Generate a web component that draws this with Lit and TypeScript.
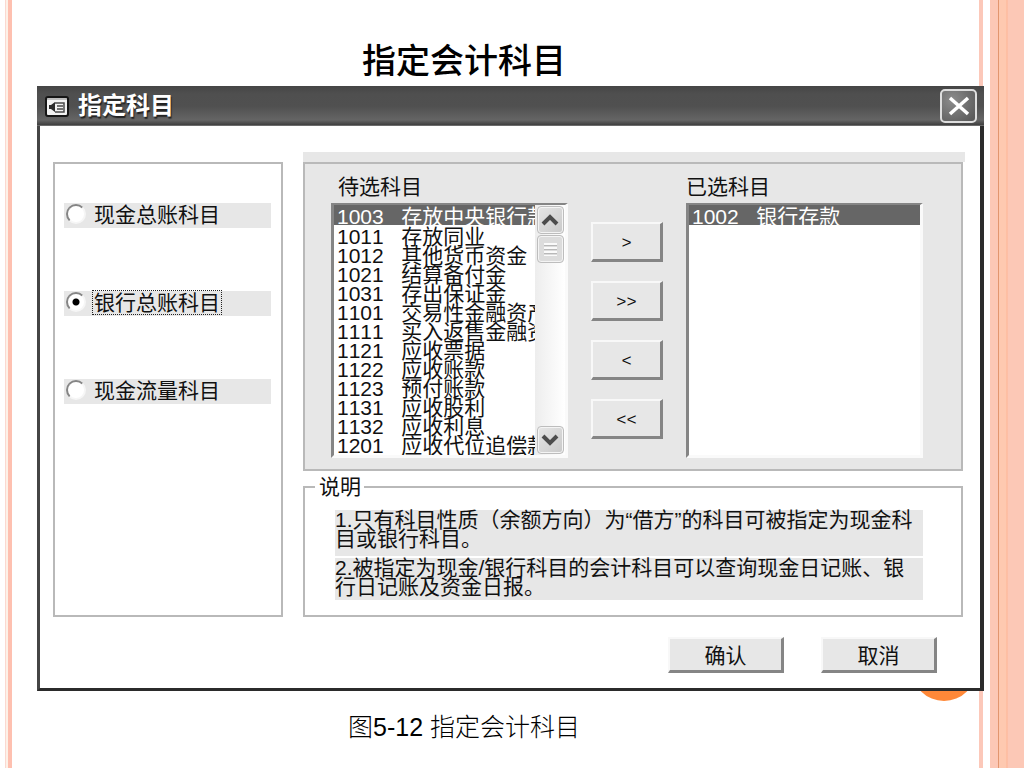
import { LitElement, html, css, svg } from "lit";
import { customElement, property, state } from "lit/decorators.js";

interface Account {
  code: string;
  name: string;
}

const PENDING: Account[] = [
  { code: "1003", name: "存放中央银行款项" },
  { code: "1011", name: "存放同业" },
  { code: "1012", name: "其他货币资金" },
  { code: "1021", name: "结算备付金" },
  { code: "1031", name: "存出保证金" },
  { code: "1101", name: "交易性金融资产" },
  { code: "1111", name: "买入返售金融资产" },
  { code: "1121", name: "应收票据" },
  { code: "1122", name: "应收账款" },
  { code: "1123", name: "预付账款" },
  { code: "1131", name: "应收股利" },
  { code: "1132", name: "应收利息" },
  { code: "1201", name: "应收代位追偿款" },
];

const CHOSEN: Account[] = [{ code: "1002", name: "银行存款" }];

const KINDS = ["现金总账科目", "银行总账科目", "现金流量科目"];

const MOVES = [
  { sign: ">", label: "选入" },
  { sign: ">>", label: "全部选入" },
  { sign: "<", label: "移出" },
  { sign: "<<", label: "全部移出" },
];

const chevron = (points: string) => svg`<polyline points=${points} fill="none" stroke="#4c4c4c" stroke-width="4" />`;

@customElement("account-list")
export class AccountList extends LitElement {
  @property() label = "";
  @property({ attribute: false }) items: Account[] = [];
  @property({ type: Boolean }) scrollable = false;

  static styles = css`
    :host {
      display: flex;
      flex-direction: column;
      min-width: 0;
    }
    label {
      height: 30px;
      line-height: 28px;
      padding-left: 7px;
      white-space: nowrap;
    }
    :host([flush]) label {
      padding-left: 0;
    }
    .frame {
      display: flex;
      height: 250px;
      background: #fff;
      border: 3px solid;
      border-width: 2px 3px 3px 3px;
      border-color: #858585 #fafafa #fafafa #858585;
    }
    select {
      flex: 1;
      min-width: 0;
      height: 100%;
      margin: 0;
      padding: 0;
      border: 0;
      outline: 0;
      border-radius: 0;
      background: #fff;
      color: #111;
      font: inherit;
      font-kerning: none;
      overflow: hidden;
      scrollbar-width: none;
    }
    option {
      display: flex;
      align-items: center;
      box-sizing: border-box;
      height: 19px;
      min-height: 0;
      padding: 0 0 0 3px;
      font: inherit;
      overflow: visible;
    }
    option:checked {
      background: #666 linear-gradient(#666, #666);
      color: #fff;
      height: 20px;
    }
    .bar {
      width: 30px;
      display: flex;
      flex-direction: column;
      align-items: center;
      gap: 1px;
      padding: 1px 0;
      box-sizing: border-box;
      background: linear-gradient(90deg, #ededed, #fff);
    }
    .bar button {
      display: grid;
      place-items: center;
      width: 27px;
      height: 28px;
      padding: 0;
      border: 1px solid #bdbdbd;
      border-radius: 4px;
      background: linear-gradient(135deg, #e6e6e6, #c9c9c9);
      box-shadow: inset 0 0 0 1px #f4f4f4;
    }
    .track {
      flex: 1;
    }
    .thumb {
      width: 25px;
      height: 26px;
      border: 1px solid #bdbdbd;
      border-radius: 4px;
      background: #dcdcdc;
      box-shadow: inset 0 0 0 1px #f4f4f4;
      display: grid;
      place-items: center;
    }
    .grip {
      width: 13px;
      height: 13px;
      background: repeating-linear-gradient(#fafafa 0 2px, #b8b8b8 2px 3px, #dcdcdc 3px 4px);
    }
    svg {
      display: block;
    }
  `;

  private scrollList(step: number) {
    this.renderRoot.querySelector("select")?.scrollBy(0, step * 19);
  }

  render() {
    return html`
      <label for="list">${this.label}</label>
      <div class="frame">
        <select id="list" size="13">
          ${this.items.map(
            (a, i) => html`<option value=${a.code} ?selected=${i === 0}>${a.code}\u00a0\u00a0\u00a0${a.name}</option>`
          )}
        </select>
        ${this.scrollable
          ? html`<div class="bar">
              <button type="button" aria-label="向上滚动" @click=${() => this.scrollList(-1)}>
                <svg width="18" height="12" viewBox="0 0 18 12">${chevron("2,10 9,3 16,10")}</svg>
              </button>
              <div class="track"><div class="thumb"><div class="grip"></div></div></div>
              <button type="button" aria-label="向下滚动" @click=${() => this.scrollList(1)}>
                <svg width="18" height="12" viewBox="0 0 18 12">${chevron("2,2 9,9 16,2")}</svg>
              </button>
            </div>`
          : null}
      </div>
    `;
  }
}

@customElement("app-root")
export class AppRoot extends LitElement {
  @state() private kind = 1;

  static styles = css`
    :host {
      display: block;
      font-family: "Liberation Sans", "Noto Sans CJK SC", sans-serif;
      font-size: 21px;
      color: #111;
    }
    .slide {
      position: relative;
      z-index: 0;
      box-sizing: border-box;
      min-height: 100vh;
      padding: 0 40px 0 37px;
      display: flex;
      flex-direction: column;
      background:
        linear-gradient(90deg, #fbd9d0 0 1px, #fdf1e8 1px 3px, #fec0b0 3px 7px) 5px 0 / 7px 100% no-repeat,
        linear-gradient(
            90deg,
            #fcc8b9 0 4px,
            #fff 4px 11px,
            #fcc8b6 11px 19px,
            #e2966f 19px 20px,
            #fec9b0 20px 27px,
            #feb595 28px,
            #fcc8b6 29px 45px
          )
          100% 0 / 45px 100% no-repeat,
        #fff;
    }
    .dot {
      position: absolute;
      z-index: -1;
      right: 48px;
      top: 637px;
      width: 64px;
      height: 64px;
      border-radius: 50%;
      background: #ff8838;
    }
    h1 {
      margin: 0;
      height: 86px;
      padding: 36px 93px 0 0;
      box-sizing: border-box;
      line-height: 50px;
      font-size: 34px;
      font-weight: 500;
      text-align: center;
      color: #000;
    }
    .caption {
      margin: 0;
      padding: 17px 93px 0 0;
      line-height: 38px;
      font-size: 25px;
      font-weight: 300;
      text-align: center;
      color: #000;
    }
    .dialog {
      border: solid #454545;
      border-width: 0 4px 3px 3px;
      border-right-color: #2b2b2b;
      border-bottom-color: #2b2b2b;
      background: #fff;
    }
    .titlebar {
      display: flex;
      align-items: center;
      gap: 9px;
      height: 40px;
      margin: 0 -4px 0 -3px;
      padding: 0 7px 0 8px;
      box-sizing: border-box;
      background: linear-gradient(#454545 0, #4f4f4f 20%, #505050 50%, #656565 85%, #404040 97%, #8a8a8a 100%);
    }
    .titlebar h2 {
      flex: 1;
      margin: 0;
      font-size: 24px;
      line-height: 36px;
      font-weight: 700;
      color: #fff;
      text-shadow: 1px 2px 1px #222;
    }
    .close {
      display: grid;
      place-items: center;
      width: 37px;
      height: 34px;
      padding: 0;
      border: 2px solid #dedede;
      border-radius: 5px;
      background: radial-gradient(circle at 30% 30%, #8c8c8c, #555);
    }
    .body {
      padding: 26px 15px 15px 13px;
    }
    .columns {
      display: grid;
      grid-template-columns: 230px 1fr;
      gap: 20px;
    }
    .panel {
      border: 2px solid #b9b9b9;
      box-sizing: border-box;
    }
    .kinds {
      margin-top: 10px;
      padding: 39px 10px 0 9px;
      display: flex;
      flex-direction: column;
      gap: 63px;
    }
    .kind {
      display: flex;
      align-items: center;
      height: 25px;
      gap: 7px;
      padding-left: 2px;
      background: #e7e7e7;
      white-space: nowrap;
    }
    .kind span {
      line-height: 23px;
      padding: 0 1px;
      margin-bottom: 3px;
    }
    .kind input:checked + span {
      outline: 1px dotted #222;
    }
    .kind input {
      appearance: none;
      width: 20px;
      height: 20px;
      margin: 0 0 3px;
      box-sizing: border-box;
      border: 2px solid;
      border-color: #858585 #f6f6f6 #f6f6f6 #858585;
      border-radius: 50%;
      background: #fff;
      outline: 0;
    }
    .kind input:checked {
      background: radial-gradient(circle, #000 0 3px, #fff 4px);
    }
    .strip {
      height: 10px;
      background: #e7e7e7;
    }
    .picker {
      margin-right: 2px;
      padding: 9px 38px 11px 26px;
      display: grid;
      grid-template-columns: minmax(0, 1fr) 72px minmax(0, 1fr);
      gap: 23px;
      background: #e7e7e7;
    }
    .moves {
      display: flex;
      flex-direction: column;
      gap: 19px;
      padding-top: 49px;
    }
    .push {
      height: 40px;
      padding: 0;
      border: solid;
      border-width: 2px 3px 3px 2px;
      border-color: #f8f8f8 #858585 #858585 #f8f8f8;
      background: #e7e7e7;
      font: inherit;
      color: #111;
    }
    .moves .push {
      padding-top: 4px;
      font-family: "Liberation Mono", monospace;
      font-size: 17px;
    }
    fieldset {
      min-width: 0;
      margin: 3px 2px 0 0;
      padding: 10px 38px 15px 30px;
      border: 2px solid #b9b9b9;
    }
    legend {
      margin-left: -20px;
      padding: 0 3px 0 4px;
      line-height: 26px;
    }
    .note {
      margin: 0 0 2px;
      line-height: 19px;
      color: #111;
      background: #e7e7e7;
      padding-bottom: 8px;
    }
    .note:last-child {
      margin: 0;
      padding-bottom: 4px;
    }
    .actions {
      display: flex;
      justify-content: flex-end;
      gap: 37px;
      padding: 20px 28px 0 0;
    }
    .actions .push {
      width: 116px;
      height: 36px;
      padding-bottom: 2px;
    }
    svg {
      display: block;
    }
  `;

  render() {
    return html`
      <main class="slide">
        <div class="dot"></div>
        <h1>指定会计科目</h1>
        <section class="dialog" role="dialog" aria-labelledby="dialog-title">
          <header class="titlebar">
            <svg width="24" height="21" viewBox="0 0 24 21" aria-hidden="true">
              <rect x="1" y="1" width="22" height="19" rx="2" fill="#f2f2f2" stroke="#161616" stroke-width="2" />
              <path d="M2 3h20" stroke="#8a8a8a" stroke-width="1" />
              <path d="M4 9h2l4-3v10l-4-3H4z" fill="#2c2c2c" />
              <path d="M10 7h9v9h-9M12 10h6M12 13h6" fill="none" stroke="#4a4a4a" stroke-width="1.500" />
            </svg>
            <h2 id="dialog-title">指定科目</h2>
            <button class="close" type="button" aria-label="关闭">
              <svg width="22" height="20" viewBox="0 0 22 20">
                <path d="M2 2l18 16M20 2L2 18" stroke="#fff" stroke-width="3.500" />
              </svg>
            </button>
          </header>
          <div class="body">
            <div class="columns">
              <div class="panel kinds" role="radiogroup" aria-label="科目类型">
                ${KINDS.map(
                  (k, i) => html`<label class="kind">
                    <input type="radio" name="kind" .checked=${this.kind === i} @change=${() => (this.kind = i)} />
                    <span>${k}</span>
                  </label>`
                )}
              </div>
              <div>
                <div class="strip"></div>
                <div class="panel picker">
                  <account-list label="待选科目" .items=${PENDING} scrollable></account-list>
                  <div class="moves">
                    ${MOVES.map((m) => html`<button class="push" type="button" aria-label=${m.label}>${m.sign}</button>`)}
                  </div>
                  <account-list label="已选科目" .items=${CHOSEN} flush></account-list>
                </div>
                <fieldset>
                  <legend>说明</legend>
                  <p class="note">1.只有科目性质（余额方向）为“借方”的科目可被指定为现金科目或银行科目。</p>
                  <p class="note">2.被指定为现金/银行科目的会计科目可以查询现金日记账、银行日记账及资金日报。</p>
                </fieldset>
              </div>
            </div>
            <div class="actions">
              <button class="push" type="button">确认</button>
              <button class="push" type="button">取消</button>
            </div>
          </div>
        </section>
        <p class="caption">图5-12 指定会计科目</p>
      </main>
    `;
  }
}
